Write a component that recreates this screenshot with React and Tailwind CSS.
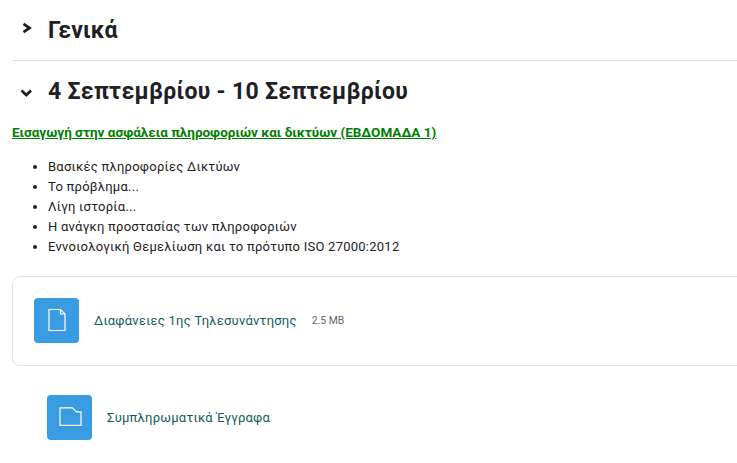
const topics = [
  'Βασικές πληροφορίες Δικτύων',
  'Το πρόβλημα...',
  'Λίγη ιστορία...',
  'Η ανάγκη προστασίας των πληροφοριών',
  'Εννοιολογική Θεμελίωση και το πρότυπο ISO 27000:2012',
];

function FileIcon() {
  return (
    <svg width="24" height="24" viewBox="0 0 24 24" fill="none" stroke="#fff" strokeWidth="1.2">
      <path d="M4 1.500h11.500l4.500 4.500v16.500h-16z" />
      <path d="M15.500 1.500v4.500h4.500" />
    </svg>
  );
}

function FolderIcon() {
  return (
    <svg width="24" height="24" viewBox="0 0 24 24" fill="none" stroke="#fff" strokeWidth="1.2">
      <path d="M2 1.800h12.500l4 4h4.500v13.500h-21z" />
    </svg>
  );
}

function ActivityIcon({ children }) {
  return (
    <div className="flex h-[45px] w-[45px] shrink-0 items-center justify-center rounded-[4px] bg-[#399be2]">
      {children}
    </div>
  );
}

export default function App() {
  return (
    <div className="h-[463px] w-[737px] overflow-hidden bg-white pl-3 font-['Roboto',sans-serif] text-[#1d2125] antialiased">
      <div className="flex h-[61px] items-center border-b border-[#dee2e6]">
        <div className="mb-1 flex w-9 pl-[8px]">
          <svg width="14" height="14" viewBox="0 0 14 14" fill="none" stroke="#1d2125" strokeWidth="2.8">
            <path d="M3.500 2.800 9.500 7 3.500 11.200" />
          </svg>
        </div>
        <h3 className="text-[23px] font-bold leading-none tracking-[0.1px]">Γενικά</h3>
      </div>
      <div className="flex h-[61px] items-center">
        <div className="mt-0.5 flex w-9 pl-[7px]">
          <svg width="14" height="14" viewBox="0 0 14 14" fill="none" stroke="#1d2125" strokeWidth="2.8">
            <path d="M2.500 4.500 7.300 9 12 4.500" />
          </svg>
        </div>
        <h3 className="text-[23px] font-bold leading-none tracking-[0.3px]">4 Σεπτεμβρίου - 10 Σεπτεμβρίου</h3>
      </div>
      <a className="block text-[13.5px] font-bold leading-5 text-[#008000] underline">
        Εισαγωγή στην ασφάλεια πληροφοριών και δικτύων (ΕΒΔΟΜΑΔΑ 1)
      </a>
      <ul className="mt-[15px] list-disc pl-[36px] text-[13px] leading-5 tracking-[0.25px]">
        {topics.map(topic => <li key={topic}>{topic}</li>)}
      </ul>
      <div className="mt-[19px] flex h-[90px] w-[760px] items-center rounded-[8px] border border-[#dee2e6] pl-[21px]">
        <div className="mb-0.5"><ActivityIcon><FileIcon /></ActivityIcon></div>
        <span className="ml-[15px] text-[13px] tracking-[0.24px] text-[#0f5c5c]">Διαφάνειες 1ης Τηλεσυνάντησης</span>
        <span className="ml-[15px] text-[10.4px] text-[#5f666d]">2.5 MB</span>
      </div>
      <div className="ml-[35px] mt-[29px] flex items-center">
        <ActivityIcon><FolderIcon /></ActivityIcon>
        <span className="ml-[15px] text-[13px] tracking-[0.24px] text-[#0f5c5c]">Συμπληρωματικά Έγγραφα</span>
      </div>
    </div>
  );
}
